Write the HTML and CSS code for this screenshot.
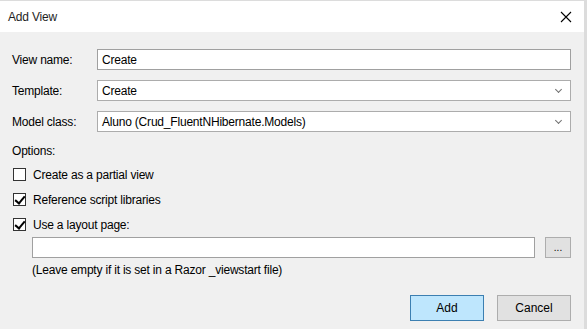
FILE: index.html
```html
<!DOCTYPE html>
<html lang="en">

<head>
    <meta charset="UTF-8">
    <meta name="viewport" content="width=device-width, initial-scale=1.0">
    <title>Add View</title>
    <link rel="stylesheet" href="styles.css">
</head>

<body>
    <div class="dialog">
        <div class="titlebar">
            <span class="title">Add View</span>
            <span class="close">
                <svg width="12" height="12" viewBox="0 0 12 12">
                    <path d="M1 1 L11 11 M11 1 L1 11" stroke="#000" stroke-width="1.1" fill="none" />
                </svg>
            </span>
        </div>

        <div class="content">
            <div class="field">
                <label>View name:</label>
                <div class="box">Create</div>
            </div>
            <div class="field">
                <label>Template:</label>
                <div class="box select">Create<span class="chev"></span></div>
            </div>
            <div class="field">
                <label>Model class:</label>
                <div class="box select">Aluno (Crud_FluentNHibernate.Models)<span class="chev"></span></div>
            </div>

            <div class="options-label">Options:</div>
            <div class="checks">
                <div class="check"><span class="cb"></span>Create as a partial view</div>
                <div class="check"><span class="cb checked"></span>Reference script libraries</div>
                <div class="check"><span class="cb checked"></span>Use a layout page:</div>
            </div>

            <div class="layout-row">
                <div class="box"></div>
                <button class="btn browse">...</button>
            </div>
            <div class="hint">(Leave empty if it is set in a Razor _viewstart file)</div>

            <div class="actions">
                <button class="btn primary">Add</button>
                <button class="btn">Cancel</button>
            </div>
        </div>
    </div>
</body>

</html>
```

FILE: styles.css
```css
* {
    margin: 0;
    padding: 0;
    box-sizing: border-box;
}

body {
    background-color: #dcdcdc;
    font-family: "Liberation Sans", Arial, sans-serif;
    font-size: 12px;
    letter-spacing: -0.2px;
    color: #000;
    padding-top: 1px;
}

.dialog {
    width: 584px;
    height: 328px;
    background-color: #f0f0f0;
}

.titlebar {
    height: 31px;
    background-color: #fff;
    display: flex;
    align-items: center;
    justify-content: space-between;
    padding: 0 12px 0 8px;
}

.title {
    font-size: 12px;
    color: #1e1e1e;
}

.close {
    display: flex;
}

.content {
    padding: 17px 13px 0 12px;
}

.field {
    display: grid;
    grid-template-columns: 85px 1fr;
    align-items: center;
    margin-bottom: 10px;
}

.box {
    position: relative;
    height: 21px;
    background-color: #fff;
    border: 1px solid #a0a0a0;
    padding: 0 4px;
    display: flex;
    align-items: center;
}

.select {
    border-color: #acacac;
}

.chev {
    position: absolute;
    right: 9px;
    top: 6px;
    width: 5px;
    height: 5px;
    border-right: 1px solid #707070;
    border-bottom: 1px solid #707070;
    transform: rotate(45deg);
}

.options-label {
    margin-top: 11px;
    height: 16px;
    line-height: 16px;
}

.checks {
    margin-top: 3px;
}

.check {
    display: flex;
    align-items: center;
    gap: 7px;
    height: 25px;
    padding-left: 1px;
}

.cb {
    width: 13px;
    height: 13px;
    border: 1px solid #333;
    background-color: #fff;
    position: relative;
}

.cb.checked::after {
    content: "";
    position: absolute;
    left: 3px;
    top: 0px;
    width: 4px;
    height: 8px;
    border-right: 2px solid #000;
    border-bottom: 2px solid #000;
    transform: rotate(40deg);
}

.layout-row {
    display: flex;
    gap: 10px;
    margin-left: 20px;
}

.layout-row .box {
    flex: 1;
    height: 21px;
}

.btn {
    font-family: inherit;
    font-size: 12px;
    background-color: #e1e1e1;
    border: 1px solid #adadad;
    color: #000;
    cursor: pointer;
}

.browse {
    width: 26px;
    height: 21px;
    font-size: 10px;
}

.hint {
    margin-left: 20px;
    margin-top: 4px;
    height: 16px;
    line-height: 16px;
}

.actions {
    display: flex;
    justify-content: flex-end;
    gap: 13px;
    margin-top: 17px;
}

.actions .btn {
    width: 74px;
    height: 26px;
}

.btn.primary {
    background-color: #bee6fd;
    border-color: #3c7fb1;
}
```
